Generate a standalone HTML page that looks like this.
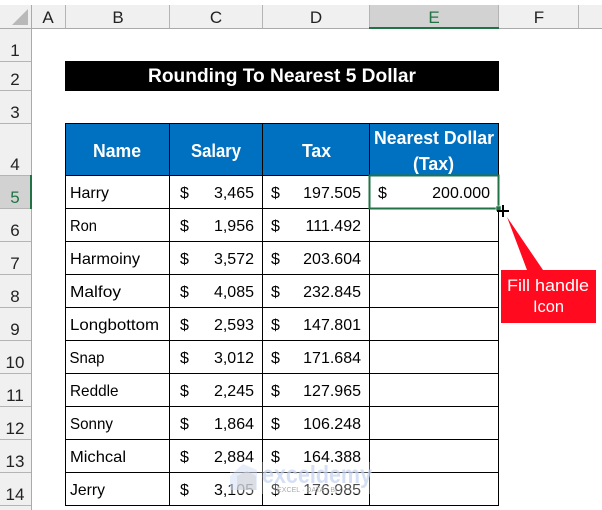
<!DOCTYPE html>
<html><head><meta charset="utf-8"><style>
html,body{margin:0;padding:0;background:#fff;width:602px;height:510px;overflow:hidden}
svg{display:block}
text{font-family:"Liberation Sans",sans-serif;font-size:16px;fill:#000}
.h{font-size:17px;fill:#222;text-anchor:middle}
.b{font-weight:bold;font-size:18px;fill:#fff}
</style></head><body>
<svg width="602" height="510" viewBox="0 0 602 510" xmlns="http://www.w3.org/2000/svg">
<rect width="602" height="510" fill="#fff"/>
<!-- headers -->
<rect x="0" y="5" width="602" height="23" fill="#f0f0f0"/>
<rect x="0" y="28" width="31" height="482" fill="#f0f0f0"/>
<polygon points="28,9 28,25 12,25" fill="#b9b9b9"/>
<rect x="369" y="5" width="130" height="22" fill="#d2d2d2"/>
<rect x="0" y="175" width="30" height="33" fill="#d2d2d2"/>
<rect x="0" y="28" width="602" height="1" fill="#aaa"/>
<rect x="31" y="5" width="1" height="505" fill="#aaa"/>
<g fill="#b4b4b4">
<rect x="65" y="5" width="1" height="23"/><rect x="169" y="5" width="1" height="23"/><rect x="262" y="5" width="1" height="23"/><rect x="369" y="5" width="1" height="23"/><rect x="498" y="5" width="1" height="23"/><rect x="578" y="5" width="1" height="23"/>
<rect y="61" width="31" height="1"/><rect y="90" width="31" height="1"/><rect y="123" width="31" height="1"/><rect y="175" width="31" height="1"/><rect y="208" width="31" height="1"/><rect y="241" width="31" height="1"/><rect y="274" width="31" height="1"/><rect y="307" width="31" height="1"/><rect y="340" width="31" height="1"/><rect y="373" width="31" height="1"/><rect y="406" width="31" height="1"/><rect y="439" width="31" height="1"/><rect y="472" width="31" height="1"/><rect y="505" width="31" height="1"/>
</g>
<rect x="369" y="27" width="130" height="2" fill="#217346"/>
<rect x="30" y="175" width="2" height="34" fill="#217346"/>
<text class="h" x="48" y="23">A</text><text class="h" x="118" y="23">B</text><text class="h" x="216" y="23">C</text><text class="h" x="316" y="23">D</text><text class="h" x="434" y="23" style="fill:#217346">E</text><text class="h" x="539" y="23">F</text>
<text class="h" x="15" y="56">1</text><text class="h" x="15" y="85">2</text><text class="h" x="15" y="118">3</text><text class="h" x="15" y="170">4</text><text class="h" x="15" y="203" style="fill:#217346">5</text><text class="h" x="15" y="236">6</text><text class="h" x="15" y="269">7</text><text class="h" x="15" y="302">8</text><text class="h" x="15" y="335">9</text><text class="h" x="15" y="368">10</text><text class="h" x="15" y="401">11</text><text class="h" x="15" y="434">12</text><text class="h" x="15" y="467">13</text><text class="h" x="15" y="500">14</text>
<!-- title -->
<rect x="65" y="61" width="434" height="30" fill="#000"/>
<text class="b" x="148" y="82" textLength="268" lengthAdjust="spacingAndGlyphs" style="font-size:19px">Rounding To Nearest 5 Dollar</text>
<!-- table header -->
<rect x="65" y="123" width="434" height="52" fill="#0070c0"/>
<text class="b" x="93" y="157" textLength="48" lengthAdjust="spacingAndGlyphs">Name</text>
<text class="b" x="191" y="157" textLength="50" lengthAdjust="spacingAndGlyphs">Salary</text>
<text class="b" x="302" y="157" textLength="29" lengthAdjust="spacingAndGlyphs">Tax</text>
<text class="b" x="374" y="144" textLength="120" lengthAdjust="spacingAndGlyphs">Nearest Dollar</text>
<text class="b" x="413" y="170" textLength="41" lengthAdjust="spacingAndGlyphs">(Tax)</text>
<!-- grid -->
<g fill="#000">
<rect x="65" y="123" width="434" height="1"/>
<rect x="65" y="175" width="434" height="1"/>
<rect x="65" y="208" width="434" height="1"/><rect x="65" y="241" width="434" height="1"/><rect x="65" y="274" width="434" height="1"/><rect x="65" y="307" width="434" height="1"/><rect x="65" y="340" width="434" height="1"/><rect x="65" y="373" width="434" height="1"/><rect x="65" y="406" width="434" height="1"/><rect x="65" y="439" width="434" height="1"/><rect x="65" y="472" width="434" height="1"/><rect x="65" y="505" width="434" height="1"/>
<rect x="65" y="123" width="1" height="383"/><rect x="169" y="123" width="1" height="383"/><rect x="262" y="123" width="1" height="383"/><rect x="369" y="123" width="1" height="383"/><rect x="498" y="123" width="1" height="383"/>
</g>
<!-- names -->
<g>
<text x="70" y="198" textLength="39" lengthAdjust="spacingAndGlyphs">Harry</text>
<text x="70" y="231" textLength="27" lengthAdjust="spacingAndGlyphs">Ron</text>
<text x="70" y="264" textLength="70" lengthAdjust="spacingAndGlyphs">Harmoiny</text>
<text x="70" y="297" textLength="51" lengthAdjust="spacingAndGlyphs">Malfoy</text>
<text x="70" y="330" textLength="89" lengthAdjust="spacingAndGlyphs">Longbottom</text>
<text x="69.5" y="363" textLength="35" lengthAdjust="spacingAndGlyphs">Snap</text>
<text x="70" y="396" textLength="48.5" lengthAdjust="spacingAndGlyphs">Reddle</text>
<text x="70" y="429" textLength="43" lengthAdjust="spacingAndGlyphs">Sonny</text>
<text x="70" y="462" textLength="56" lengthAdjust="spacingAndGlyphs">Michcal</text>
<text x="70" y="495" textLength="35" lengthAdjust="spacingAndGlyphs">Jerry</text>
</g>
<!-- dollars -->
<g>
<text x="180" y="198">$</text><text x="180" y="231">$</text><text x="180" y="264">$</text><text x="180" y="297">$</text><text x="180" y="330">$</text><text x="180" y="363">$</text><text x="180" y="396">$</text><text x="180" y="429">$</text><text x="180" y="462">$</text><text x="180" y="495">$</text>
<text x="271" y="198">$</text><text x="271" y="231">$</text><text x="271" y="264">$</text><text x="271" y="297">$</text><text x="271" y="330">$</text><text x="271" y="363">$</text><text x="271" y="396">$</text><text x="271" y="429">$</text><text x="271" y="462">$</text><text x="271" y="495">$</text>
<text x="378" y="198">$</text>
</g>
<g text-anchor="end">
<text x="254" y="198">3,465</text><text x="254" y="231">1,956</text><text x="254" y="264">3,572</text><text x="254" y="297">4,085</text><text x="254" y="330">2,593</text><text x="254" y="363">3,012</text><text x="254" y="396">2,245</text><text x="254" y="429">1,864</text><text x="254" y="462">2,884</text><text x="254" y="495">3,105</text>
<text x="361" y="198">197.505</text><text x="361" y="231">111.492</text><text x="361" y="264">203.604</text><text x="361" y="297">232.845</text><text x="361" y="330">147.801</text><text x="361" y="363">171.684</text><text x="361" y="396">127.965</text><text x="361" y="429">106.248</text><text x="361" y="462">164.388</text><text x="361" y="495">176.985</text>
<text x="490" y="198">200.000</text>
</g>
<!-- watermark (sits above the cell content, fading it) -->
<rect x="230" y="462" width="142" height="32" fill="#fff" opacity="0.3"/>
<polygon points="230,476 243,464 257,470 257,490 230,490" fill="#c9d6f2" opacity="0.45"/>
<polygon points="237,490 237,476 247,471 256,476 256,490" fill="#d0d0d0" opacity="0.5"/>
<text x="262" y="483" textLength="110" lengthAdjust="spacingAndGlyphs" style="font-size:25px;font-weight:bold;fill:#c5d3f2;opacity:.7">exceldemy</text>
<text x="277" y="492" textLength="60" lengthAdjust="spacing" style="font-size:7px;fill:#aaa">EXCEL · DATA · BI</text>
<!-- selection -->
<rect x="369.5" y="175.5" width="129" height="33" fill="none" stroke="#217346" stroke-width="2"/>
<rect x="496" y="206" width="5" height="5" fill="#217346" stroke="#fff" stroke-width="0.5"/>
<rect x="497" y="210" width="12" height="2" fill="#000"/>
<rect x="502" y="205" width="2" height="12" fill="#000"/>
<!-- callout -->
<polygon points="507,217 543,270 596,270 596,323 501,323 501,270 527,270" fill="#ff0a1e"/>
<text x="507" y="291" textLength="82" lengthAdjust="spacingAndGlyphs" style="fill:#fff;font-size:17px">Fill handle</text>
<text x="533" y="312" textLength="31" lengthAdjust="spacingAndGlyphs" style="fill:#fff;font-size:17px">Icon</text>
</svg>
</body></html>
